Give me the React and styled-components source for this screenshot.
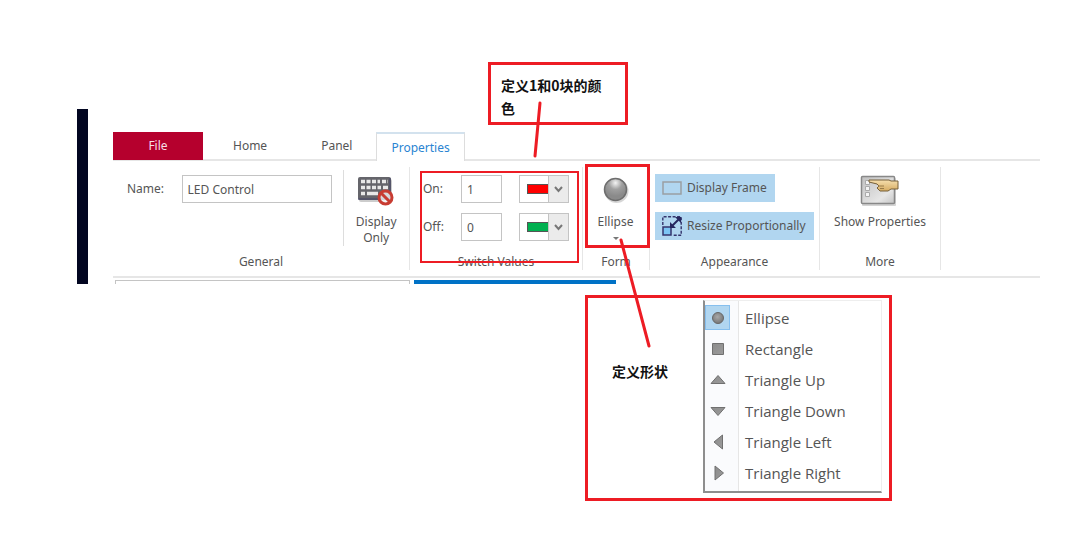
import styled, { createGlobalStyle } from "styled-components"

const red = "#ed1c24"
const line = "#e6e6e6"
const text = "#555555"

const App = () => {
  return (
    <Page>
      <Global />
      <Window>
        <Edge />
        <Ribbon>
          <Tabs>
            <FileTab>File</FileTab>
            <Tab $pad={30}>Home</Tab>
            <Tab $pad={24}>Panel</Tab>
            <ActiveTab>Properties</ActiveTab>
          </Tabs>
          <Groups>
            <Group $width={297}>
              <GroupBody>
                <NameLabel htmlFor="name">Name:</NameLabel>
                <NameInput id="name" defaultValue="LED Control" />
                <Divider />
                <BigButton $width={66}>
                  <KeyboardIcon />
                  <span>
                    Display
                    <br />
                    Only
                  </span>
                </BigButton>
              </GroupBody>
              <GroupTitle>General</GroupTitle>
            </Group>
            <Group $width={173}>
              <Values>
                <ValueRow id="on" label="On:" value="1" color="#ff0000" name="Red" />
                <ValueRow id="off" label="Off:" value="0" color="#00b050" name="Green" />
              </Values>
              <GroupTitle>Switch Values</GroupTitle>
              <ValuesMark />
              <ColorNote>
                定义1和0块的颜色
                <ColorPointer viewBox="0 0 12 60">
                  <path d="M8 3 L3 56" />
                </ColorPointer>
              </ColorNote>
            </Group>
            <Group $width={67}>
              <GroupBody>
                <BigButton $width={65}>
                  <BallIcon />
                  <span>Ellipse</span>
                  <Caret viewBox="0 0 6 4">
                    <path d="M0 0h6L3 3z" fill="#777" />
                  </Caret>
                </BigButton>
              </GroupBody>
              <GroupTitle>Form</GroupTitle>
              <FormMark />
            </Group>
            <Group $width={170}>
              <Toggles>
                <Toggle aria-pressed="true">
                  <FrameIcon />
                  Display Frame
                </Toggle>
                <Toggle aria-pressed="true">
                  <ResizeIcon />
                  Resize Proportionally
                </Toggle>
              </Toggles>
              <GroupTitle>Appearance</GroupTitle>
            </Group>
            <Group $width={121}>
              <GroupBody>
                <BigButton $width={120}>
                  <PropertiesIcon />
                  <span>Show Properties</span>
                </BigButton>
              </GroupBody>
              <GroupTitle>More</GroupTitle>
            </Group>
          </Groups>
          <Docks>
            <Dock />
            <ActiveDock />
          </Docks>
        </Ribbon>
      </Window>
      <ShapePanel>
        <ShapeNote>定义形状</ShapeNote>
        <Menu>
          {shapes.map(({ name, icon }, i) => (
            <li key={name}>
              <MenuItem>
                <MenuIcon $active={i === 0}>
                  <svg width="16" height="16" viewBox="0 0 16 16">
                    <ShapeFill />
                    {icon}
                  </svg>
                </MenuIcon>
                <MenuText>{name}</MenuText>
              </MenuItem>
            </li>
          ))}
        </Menu>
        <ShapePointer viewBox="0 0 36 112">
          <path d="M4 3 L32 109" />
        </ShapePointer>
      </ShapePanel>
    </Page>
  )
}
export default App

const ValueRow = ({ id, label, value, color, name }) => (
  <Row>
    <label htmlFor={id}>{label}</label>
    <ValueInput id={id} defaultValue={value} />
    <ColorBox>
      <ColorSelect aria-label={`${label} color`}>
        <option>{name}</option>
      </ColorSelect>
      <ColorFace>
        <Swatch $color={color} />
        <Arrow>
          <svg width="9" height="7" viewBox="0 0 9 7">
            <path d="M1 1l3.5 4L8 1" fill="none" stroke="#777" strokeWidth="2" />
          </svg>
        </Arrow>
      </ColorFace>
    </ColorBox>
  </Row>
)

const ShapeFill = () => (
  <defs>
    <linearGradient id="shape" x1="0" y1="0" x2="1" y2="1">
      <stop offset="0" stopColor="#8c8c8c" />
      <stop offset="1" stopColor="#9b9b9b" />
    </linearGradient>
    <radialGradient id="dot" cx=".45" cy=".4" r=".6">
      <stop offset="0" stopColor="#a8a8a8" />
      <stop offset="1" stopColor="#767676" />
    </radialGradient>
  </defs>
)

const shapeProps = { fill: "url(#shape)", stroke: "#707070", strokeLinejoin: "round" }

const shapes = [
  { name: "Ellipse", icon: <circle cx="8" cy="8" r="5.5" fill="url(#dot)" stroke="#686868" /> },
  { name: "Rectangle", icon: <path d="M2.5 2.5h11v11h-11z" {...shapeProps} /> },
  { name: "Triangle Up", icon: <path d="M8 3.5L15 11.5H1z" {...shapeProps} /> },
  { name: "Triangle Down", icon: <path d="M8 12.5L1 4.5h14z" {...shapeProps} /> },
  { name: "Triangle Left", icon: <path d="M4 8L12.5 1v14z" {...shapeProps} /> },
  { name: "Triangle Right", icon: <path d="M13.5 8L5 1v14z" {...shapeProps} /> },
]

const KeyboardIcon = () => (
  <svg width="38" height="32" viewBox="0 0 38 32">
    <rect x="2" y="4" width="33" height="23" rx="2" fill="#999" opacity=".5" />
    <rect x="1" y="2" width="33" height="23" rx="2" fill="#65656b" />
    <path d="M1 24h32V3" fill="none" stroke="#46466a" />
    <g stroke="#e8e8e8" strokeWidth="3.5">
      <path d="M4 6.5h19" strokeDasharray="4 1.5" />
      <path d="M25 6.5h6M4 12.500h20" strokeDasharray="4 1.500" />
      <path d="M4 18.500h4M10 18.500h11M26 12.500h5" />
    </g>
    <circle cx="28.500" cy="22.500" r="6.500" fill="#fff" fillOpacity=".75" stroke="#c83c32" strokeWidth="3" />
    <path d="M24 18l9 9" stroke="#c83c32" strokeWidth="3" />
  </svg>
)

const BallIcon = () => (
  <svg width="28" height="32" viewBox="0 0 28 32">
    <defs>
      <radialGradient id="ball" cx=".5" cy=".2" r=".6">
        <stop offset="0" stopColor="#f4f4f4" />
        <stop offset=".5" stopColor="#a0a0a0" />
        <stop offset="1" stopColor="#8a8a8a" />
      </radialGradient>
    </defs>
    <circle cx="14.5" cy="16" r="12" fill="#bbb" opacity=".6" />
    <circle cx="13.5" cy="14.5" r="11" fill="url(#ball)" stroke="#6e6e6e" strokeWidth="1.5" />
  </svg>
)

const FrameIcon = () => (
  <svg width="20" height="20" viewBox="0 0 20 20">
    <rect x="1" y="4" width="18" height="12" fill="none" stroke="#9a9fa3" strokeWidth="1.500" />
  </svg>
)

const ResizeIcon = () => (
  <svg width="20" height="20" viewBox="0 0 20 20">
    <path d="M.8 9V.8h18.400v18.400H11" fill="none" stroke="#34346c" strokeWidth="1.400" strokeDasharray="3 1.500" />
    <rect x="1" y="11" width="8" height="8" fill="#7cc4f4" stroke="#34346c" strokeWidth="1.500" />
    <path d="M10 10l7-7" stroke="#26265e" strokeWidth="2" />
    <path d="M13 1h6v6zM8 6v6h6z" fill="#26265e" />
  </svg>
)

const PropertiesIcon = () => (
  <svg width="40" height="32" viewBox="0 0 40 32">
    <defs>
      <linearGradient id="sheet" x1="0" y1="0" x2="1" y2="1">
        <stop offset="0" stopColor="#c0c0c0" />
        <stop offset=".7" stopColor="#e6e6e6" />
        <stop offset="1" stopColor="#c4c4c4" />
      </linearGradient>
      <linearGradient id="hand" x1="0" y1="0" x2="0" y2="1">
        <stop offset="0" stopColor="#f6dfae" />
        <stop offset="1" stopColor="#d6ac62" />
      </linearGradient>
    </defs>
    <rect x="2" y="3" width="34" height="28" rx="1" fill="#aaa" opacity=".5" />
    <rect x="1.500" y="1.500" width="33" height="27" rx="1" fill="url(#sheet)" stroke="#888" strokeWidth="1.500" />
    <path d="M5.500 5.500h4v4h-4zM5.500 11.500h4v4h-4zM5.500 17.500h4v4h-4z" fill="#f4f4f4" stroke="#aaa" />
    <path d="M9 5h20l2 1h7v8h-7l-3 2h-8l-3-3 2-2-2-2-8-2z" fill="url(#hand)" stroke="#77603a" />
    <path d="M18 11h6M20 13.500h4" stroke="#9a7c48" />
  </svg>
)

//styling

const Global = createGlobalStyle`
  * {
    box-sizing: border-box;
  }
  body {
    margin: 0;
    background: #ffffff;
    color: ${text};
    font: 12px/16px "Noto Sans", sans-serif;
  }
  button, input, select {
    font: inherit;
    color: inherit;
    border: 0;
    padding: 0;
    background: none;
  }
  svg {
    display: block;
    flex: none;
  }
`

const Page = styled.main`
  padding: 109px 40px 36px 77px;
`

const Window = styled.section`
  display: flex;
  gap: 25px;
`

const Edge = styled.div`
  width: 11px;
  background: #020621;
`

const Ribbon = styled.div`
  flex: 1;
  padding-top: 23px;
`

const Tabs = styled.nav`
  display: flex;
  height: 29px;
  border-bottom: 2px solid ${line};
`

const Tab = styled.button`
  height: 28px;
  padding: 0 ${(p) => p.$pad}px;
`

const FileTab = styled(Tab)`
  width: 90px;
  padding: 0;
  background: #b5002d;
  color: #f6dfe5;
`

const ActiveTab = styled(Tab)`
  height: 29px;
  padding: 0 14px;
  background: #ffffff;
  border: 1px solid #dddddd;
  border-top: 2px solid #d3e2ee;
  border-bottom: 0;
  color: #2a84d2;
`

const Groups = styled.div`
  display: flex;
  height: 117px;
  padding: 6px 0;
  border-bottom: 2px solid ${line};
`

const Group = styled.section`
  position: relative;
  display: flex;
  flex-direction: column;
  justify-content: space-between;
  width: ${(p) => p.$width}px;
  border-right: 1px solid ${line};
`

const GroupBody = styled.div`
  display: flex;
  align-items: flex-start;
`

const GroupTitle = styled.h2`
  margin: 0;
  font-size: 12px;
  line-height: 16px;
  font-weight: 400;
  text-align: center;
`

const Field = styled.input`
  height: 28px;
  padding: 0 5px;
  background: #ffffff;
  border: 1px solid #c4c4c4;
`

const NameLabel = styled.label`
  width: 69px;
  padding: 14px 0 0 14px;
`

const NameInput = styled(Field)`
  width: 150px;
  margin-top: 8px;
`

const Divider = styled.div`
  width: 1px;
  height: 76px;
  margin: 3px 0 0 11px;
  background: #dddddd;
`

const BigButton = styled.button`
  display: flex;
  flex-direction: column;
  align-items: center;
  gap: 7px;
  width: ${(p) => p.$width}px;
  padding-top: 8px;
  white-space: nowrap;
`

const Caret = styled.svg`
  width: 6px;
  height: 4px;
`

const Values = styled.div`
  display: flex;
  flex-direction: column;
  gap: 10px;
  padding: 8px 0 0 13px;
`

const Row = styled.div`
  display: grid;
  grid-template-columns: 38px 41px 50px;
  align-items: center;
`

const ValueInput = styled(Field)`
  width: 41px;
`

const ColorBox = styled.div`
  display: grid;
  width: 50px;
  height: 28px;
  margin-left: 17px;
  > * {
    grid-area: 1 / 1;
  }
`

const ColorSelect = styled.select`
  appearance: none;
  width: 50px;
  border: 1px solid #c4c4c4;
  color: transparent;
`

const ColorFace = styled.span`
  display: flex;
  justify-content: flex-end;
  align-items: center;
  padding: 1px;
  pointer-events: none;
`

const Swatch = styled.span`
  width: 21px;
  height: 10px;
  border: 1px solid #555555;
  border-right: 0;
  background: ${(p) => p.$color};
`

const Arrow = styled.span`
  display: grid;
  place-items: center;
  width: 20px;
  height: 26px;
  background: #ebebeb;
  border-left: 1px solid #c4c4c4;
`

const ValuesMark = styled.div`
  position: absolute;
  inset: 4px 3px 7px 10px;
  border: 2px solid ${red};
  pointer-events: none;
`

const FormMark = styled.div`
  position: absolute;
  inset: -3px -1px 22px 2px;
  border: 3px solid ${red};
  pointer-events: none;
`

const Note = styled.p`
  margin: 0;
  color: #111111;
  font: 700 14px/23px "Noto Sans CJK SC", sans-serif;
`

const ColorNote = styled(Note)`
  position: absolute;
  bottom: 145px;
  left: 78px;
  width: 140px;
  height: 63px;
  padding: 9px 16px 0 10px;
  border: 3px solid ${red};
`

const Pointer = styled.svg`
  position: absolute;
  fill: none;
  stroke: ${red};
  stroke-width: 3px;
  stroke-linecap: round;
`

const ColorPointer = styled(Pointer)`
  top: 35px;
  left: 41px;
  width: 12px;
  height: 60px;
`

const ShapePointer = styled(Pointer)`
  top: -61px;
  left: 29px;
  width: 36px;
  height: 112px;
`

const Toggles = styled.div`
  display: flex;
  flex-direction: column;
  align-items: flex-start;
  gap: 10px;
  padding: 7px 0 0 5px;
`

const Toggle = styled.button`
  display: flex;
  align-items: center;
  gap: 5px;
  height: 28px;
  padding: 0 8px 0 7px;
  background: #b1d6f0;
  white-space: nowrap;
`

const Docks = styled.div`
  display: flex;
  gap: 4px;
  height: 6px;
  padding: 2px 0 0 2px;
`

const Dock = styled.div`
  width: 295px;
  border: 1px solid #c4c4c4;
  border-bottom: 0;
`

const ActiveDock = styled.div`
  width: 202px;
  background: #0072c6;
`

const ShapePanel = styled.section`
  position: relative;
  display: flex;
  justify-content: space-between;
  align-items: flex-start;
  width: 307px;
  margin: 11px 0 0 508px;
  padding: 2px 7px 5px 24px;
  border: 3px solid ${red};
`

const ShapeNote = styled(Note)`
  padding-top: 60px;
`

const Menu = styled.ul`
  display: grid;
  grid-auto-rows: 1fr;
  width: 179px;
  height: 193px;
  margin: 0;
  padding: 1px 0 2px;
  list-style: none;
  border: 1px solid #eeeeee;
  border-left: 2px solid #8e8e8e;
  border-bottom: 2px solid #8e8e8e;
  background: linear-gradient(90deg, #fafbfd 33px, ${line} 33px 34px, #ffffff 34px);
`

const MenuItem = styled.button`
  display: flex;
  align-items: center;
  gap: 15px;
  width: 100%;
  height: 100%;
`

const MenuIcon = styled.span`
  display: grid;
  place-items: center;
  width: 25px;
  height: 25px;
  border: 1px solid ${(p) => (p.$active ? "#86bfee" : "transparent")};
  background: ${(p) => (p.$active ? "#b1d6f0" : "none")};
`

const MenuText = styled.span`
  font: 15px/20px "Open Sans", sans-serif;
`
